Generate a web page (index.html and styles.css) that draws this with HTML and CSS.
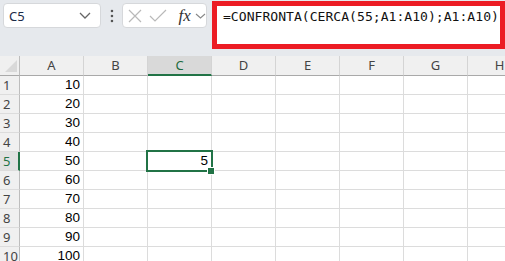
FILE: index.html
```html
<!DOCTYPE html>
<html>
<head>
<meta charset="utf-8">
<link rel="stylesheet" href="styles.css">
</head>
<body>
<div class="topbar">
  <div class="namebox">
    <span class="name">C5</span>
    <svg class="chev" width="12" height="7" viewBox="0 0 12 7"><polyline points="1,1 6,6 11,1" fill="none" stroke="#666" stroke-width="1.3"/></svg>
  </div>
  <svg class="dots" width="4" height="14" viewBox="0 0 4 14"><circle cx="2" cy="2" r="1.3" fill="#555"/><circle cx="2" cy="7" r="1.3" fill="#555"/><circle cx="2" cy="12" r="1.3" fill="#555"/></svg>
  <div class="fxbox">
    <svg class="ico" width="14" height="14" viewBox="0 0 14 14"><path d="M1 1 L13 13 M13 1 L1 13" stroke="#b9b9b9" stroke-width="1.2" fill="none"/></svg>
    <svg class="ico chk" width="18" height="14" viewBox="0 0 18 14"><polyline points="1,7 6,12 17,1" stroke="#b9b9b9" stroke-width="1.2" fill="none"/></svg>
    <span class="fx">fx</span>
    <svg class="chev2" width="11" height="6" viewBox="0 0 11 6"><polyline points="1,1 5.5,5 10,1" fill="none" stroke="#888" stroke-width="1.1"/></svg>
  </div>
  <div class="formula">=CONFRONTA(CERCA(55;A1:A10);A1:A10)</div>
</div>
<div class="grid">
  <div class="corner"><span class="tri"></span></div>
  <div class="ch">A</div><div class="ch">B</div><div class="ch csel">C</div><div class="ch">D</div><div class="ch">E</div><div class="ch">F</div><div class="ch">G</div><div class="ch">H</div>

  <div class="rh">1</div><div class="c">10</div><div class="c"></div><div class="c"></div><div class="c"></div><div class="c"></div><div class="c"></div><div class="c"></div><div class="c"></div>
  <div class="rh">2</div><div class="c">20</div><div class="c"></div><div class="c"></div><div class="c"></div><div class="c"></div><div class="c"></div><div class="c"></div><div class="c"></div>
  <div class="rh">3</div><div class="c">30</div><div class="c"></div><div class="c"></div><div class="c"></div><div class="c"></div><div class="c"></div><div class="c"></div><div class="c"></div>
  <div class="rh">4</div><div class="c">40</div><div class="c"></div><div class="c"></div><div class="c"></div><div class="c"></div><div class="c"></div><div class="c"></div><div class="c"></div>
  <div class="rh rsel">5</div><div class="c">50</div><div class="c"></div><div class="c sel">5<span class="handle"></span></div><div class="c"></div><div class="c"></div><div class="c"></div><div class="c"></div><div class="c"></div>
  <div class="rh">6</div><div class="c">60</div><div class="c"></div><div class="c"></div><div class="c"></div><div class="c"></div><div class="c"></div><div class="c"></div><div class="c"></div>
  <div class="rh">7</div><div class="c">70</div><div class="c"></div><div class="c"></div><div class="c"></div><div class="c"></div><div class="c"></div><div class="c"></div><div class="c"></div>
  <div class="rh">8</div><div class="c">80</div><div class="c"></div><div class="c"></div><div class="c"></div><div class="c"></div><div class="c"></div><div class="c"></div><div class="c"></div>
  <div class="rh">9</div><div class="c">90</div><div class="c"></div><div class="c"></div><div class="c"></div><div class="c"></div><div class="c"></div><div class="c"></div><div class="c"></div>
  <div class="rh">10</div><div class="c">100</div><div class="c"></div><div class="c"></div><div class="c"></div><div class="c"></div><div class="c"></div><div class="c"></div><div class="c"></div>
</div>
</body>
</html>
```
FILE: styles.css
```css
html, body {
  margin: 0;
  padding: 0;
}
body {
  width: 505px;
  height: 261px;
  overflow: hidden;
  background: #ffffff;
  font-family: "Noto Sans", "Open Sans", sans-serif;
}
.topbar {
  height: 56px;
  background: #e6e9ed;
  display: flex;
  align-items: flex-start;
}
.namebox {
  box-sizing: border-box;
  margin: 3px 0 0 3px;
  width: 100px;
  height: 25px;
  background: #fff;
  border: 1px solid #d6d8db;
  border-radius: 4px;
  display: flex;
  align-items: center;
  padding: 0 9px 0 5px;
}
.name {
  font-size: 13px;
  color: #1b2a48;
  flex: 1;
  line-height: 16px;
}
.chev { display: block; }
.dots {
  margin: 9px 0 0 9px;
  display: block;
}
.fxbox {
  box-sizing: border-box;
  margin: 3px 0 0 8px;
  width: 86px;
  height: 25px;
  background: #fff;
  border: 1px solid #d6d8db;
  border-radius: 4px;
  display: flex;
  align-items: center;
  padding: 0 0 0 5px;
}
.ico { display: block; }
.chk { margin-left: 7px; }
.fx {
  font-family: "Liberation Serif", serif;
  font-style: italic;
  font-size: 17px;
  color: #333;
  margin-left: 11px;
  line-height: 18px;
}
.chev2 { display: block; margin-left: 4px; margin-top: 1px; }
.formula {
  box-sizing: border-box;
  flex-shrink: 0;
  margin: 1px 0 0 5px;
  width: 293px;
  height: 48px;
  background: #fff;
  border: 5px solid #ec1c24;
  padding: 2px 0 0 6px;
  font-family: "DejaVu Sans Mono", "Liberation Mono", monospace;
  font-size: 13.1px;
  line-height: 18px;
  color: #111;
  white-space: nowrap;
  overflow: hidden;
}
.grid {
  display: grid;
  grid-template-columns: 20px repeat(8, 64px);
  grid-template-rows: 20px repeat(10, 19px);
  width: 532px;
}
.grid > div {
  box-sizing: border-box;
  border-right: 1px solid #dcdcdc;
  border-bottom: 1px solid #dcdcdc;
}
.corner {
  background: #f0f0f0;
  position: relative;
  border-bottom-color: #a9a9a9 !important;
  border-right-color: #bdbdbd !important;
}
.tri {
  position: absolute;
  right: 2px;
  bottom: 3px;
  width: 0;
  height: 0;
  border-left: 12px solid transparent;
  border-bottom: 12px solid #d9d9d9;
}
.ch {
  background: #f0f0f0;
  border-bottom-color: #a9a9a9 !important;
  border-right-color: #d4d4d4 !important;
  text-align: center;
  font-size: 13px;
  line-height: 19px;
  color: #444;
}
.csel {
  background: #d9d9d9;
  border-bottom: 2px solid #217346 !important;
  color: #1d6b40;
}
.rh {
  background: #f0f0f0;
  border-right-color: #bdbdbd !important;
  border-bottom-color: #dcdcdc;
  font-size: 13px;
  line-height: 18px;
  color: #444;
  padding-left: 3px;
  white-space: nowrap;
  overflow: hidden;
}
.rsel {
  background: #e1e1e1;
  color: #217346;
  border-right: 2px solid #217346 !important;
}
.c {
  font-family: "Liberation Sans", Arial, sans-serif;
  font-size: 13.5px;
  line-height: 18px;
  text-align: right;
  padding-right: 3px;
  color: #000;
}
.sel {
  position: relative;
}
.sel::before {
  content: "";
  position: absolute;
  top: -2px;
  left: -2px;
  right: -2px;
  bottom: -2px;
  border: 2px solid #217346;
}
.handle {
  position: absolute;
  right: -3px;
  bottom: -4px;
  width: 6px;
  height: 6px;
  background: #217346;
  border: 1px solid #fff;
  box-sizing: content-box;
  margin: -1px;
}
```
